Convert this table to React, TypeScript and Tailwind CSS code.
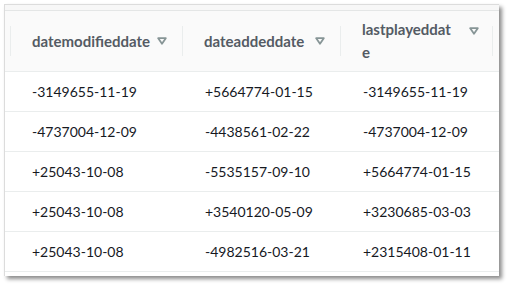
import React from "react";

const rows = [
  ["-3149655-11-19", "+5664774-01-15", "-3149655-11-19"],
  ["-4737004-12-09", "-4438561-02-22", "-4737004-12-09"],
  ["+25043-10-08", "-5535157-09-10", "+5664774-01-15"],
  ["+25043-10-08", "+3540120-05-09", "+3230685-03-03"],
  ["+25043-10-08", "-4982516-03-21", "+2315408-01-11"],
];

const cols = ["w-[173px]", "w-[158px]", "w-[152px]"];

function SortIcon({ top = "mt-[7px]" }: { top?: string }) {
  return (
    <svg width="10" height="8" viewBox="0 0 10 8" className={`shrink-0 ${top}`}>
      <path d="M1.2 1.2 L8.8 1.2 L5 6.8 Z" fill="none" stroke="#879596" strokeWidth="1.8" strokeLinejoin="round" />
    </svg>
  );
}

export default function App() {
  return (
    <div className="w-[508px] h-[286px] bg-white pt-[4px] pl-[4px]" style={{ fontFamily: 'Lato, "Open Sans", sans-serif' }}>
      <div className="w-[495px] h-[272px] bg-white border-l border-t border-[#dcdcdc] shadow-[3px_3px_4px_rgba(0,0,0,0.45)] text-[14px]">
        <div className="h-[6px] bg-[#f7f7f7] border-b border-[#e4e6e6]"></div>
        <div className="flex h-[61px] bg-[#fafafa] border-b border-[#eaeded] pl-[5px] text-[15px]">
          <div className="flex items-stretch">
            <div className={`${cols[0]} flex items-center pl-[21px] pr-[15px] border-l border-r border-[#eaeded] my-[15px]`}>
              <div className="flex w-full items-start justify-between">
                <div className="leading-[22px] font-bold text-[#545b64]">datemodifieddate</div>
                <SortIcon />
              </div>
            </div>
            <div className={`${cols[1]} flex items-center pl-[21px] pr-[15px] border-r border-[#eaeded] my-[15px]`}>
              <div className="flex w-full items-start justify-between">
                <div className="leading-[22px] font-bold text-[#545b64]">dateaddeddate</div>
                <SortIcon />
              </div>
            </div>
            <div className={`${cols[2]} flex items-center pl-[21px] pr-[13px] border-r border-[#eaeded] my-[15px]`}>
              <div className="flex w-full items-start justify-between">
                <div className="leading-[23px] font-bold text-[#545b64] -my-[8px] whitespace-nowrap">
                  lastplayeddat
                  <br />e
                </div>
                <SortIcon top="mt-[1px]" />
              </div>
            </div>
          </div>
        </div>
        {rows.map((r, i) => (
          <div key={i} className="flex h-[40px] border-b border-[#eaeded] pl-[6px] items-center text-[#16191f]">
            {r.map((c, j) => (
              <div key={j} className={`${cols[j]} pl-[21px]`}>
                {c}
              </div>
            ))}
          </div>
        ))}
      </div>
    </div>
  );
}
